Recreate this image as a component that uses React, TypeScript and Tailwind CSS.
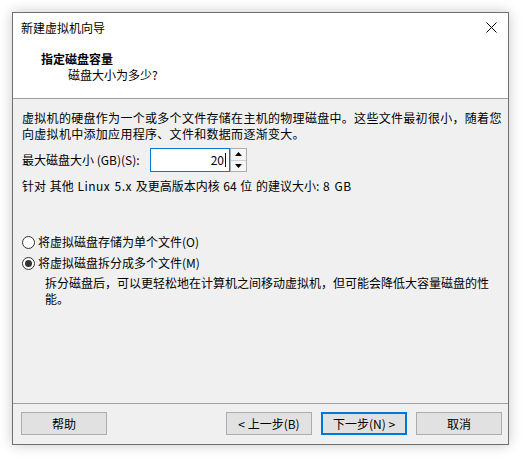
import React from "react";

const font = { fontFamily: '"Noto Sans CJK SC", "Noto Sans", sans-serif' };

function Btn({ children, primary }: { children: React.ReactNode; primary?: boolean }) {
  return (
    <div
      className={
        "w-[86px] h-[23px] flex items-center justify-center text-[12px] leading-none bg-[#e1e1e1] text-black " +
        (primary ? "border-2 border-[#0078d7]" : "border border-[#adadad]")
      }
    >
      {children}
    </div>
  );
}

function Radio({ checked }: { checked?: boolean }) {
  return (
    <div className="w-[13px] h-[13px] rounded-full border border-[#333333] bg-white flex items-center justify-center shrink-0">
      {checked && <div className="w-[7px] h-[7px] rounded-full bg-[#333333]" />}
    </div>
  );
}

export default function App() {
  return (
    <div className="w-[525px] h-[461px] bg-white pl-[12px] pt-[12px]" style={font}>
      <div className="w-[497px] h-[433px] border border-[#707070] bg-[#f0f0f0] flex flex-col shadow-[0_0_12px_rgba(0,0,0,0.22)] text-black">
        {/* header */}
        <div className="bg-white border-b border-[#a0a0a0] h-[86px] flex flex-col">
          <div className="h-[29px] flex items-center justify-between pl-[8px] pr-[10px]">
            <span className="text-[12px] leading-none">新建虚拟机向导</span>
            <svg width="11" height="11" viewBox="0 0 11 11" className="mr-[1px]">
              <path d="M0.5 0.5 L10.5 10.5 M10.5 0.5 L0.5 10.5" stroke="#000" strokeWidth="1" />
            </svg>
          </div>
          <div className="pl-[28px] pt-[9px] text-[12px] leading-[16px] font-bold">指定磁盘容量</div>
          <div className="pl-[55px] text-[12px] leading-[16px]">磁盘大小为多少?</div>
        </div>

        {/* body */}
        <div className="flex-1 flex flex-col pl-[9px] pr-[2px] text-[12px] leading-[16px]">
          <p className="mt-[11px] tracking-[0.3px]">
            虚拟机的硬盘作为一个或多个文件存储在主机的物理磁盘中。这些文件最初很小，随着您向虚拟机中添加应用程序、文件和数据而逐渐变大。
          </p>
          <div className="flex items-center mt-[6px] h-[24px]">
            <span className="w-[128px]">最大磁盘大小 (GB)(S):</span>
            <div className="w-[80px] h-[24px] border border-[#0078d7] bg-white flex items-center justify-end pr-[3px]">
              <span>20</span>
              <span className="w-px h-[14px] bg-black ml-px" />
            </div>
            <div className="w-[17px] h-[24px] border border-[#adadad] bg-[#f0f0f0] flex flex-col">
              <div className="flex-1 flex items-center justify-center border-b border-[#cfcfcf] bg-[#f6f6f6]">
                <svg width="7" height="4" viewBox="0 0 7 4"><path d="M3.5 0 L7 4 L0 4 Z" fill="#000" /></svg>
              </div>
              <div className="flex-1 flex items-center justify-center bg-[#f6f6f6]">
                <svg width="7" height="4" viewBox="0 0 7 4"><path d="M0 0 L7 0 L3.5 4 Z" fill="#000" /></svg>
              </div>
            </div>
          </div>
          <div className="mt-[6px] [word-spacing:1px]">
            针对 其他 <span className="tracking-[0.5px]">Linux 5.x</span> 及更高版本内核 64 位 的建议大小: <span className="tracking-[0.5px]">8 GB</span>
          </div>

          <div className="flex items-center mt-[40px] gap-[3px]">
            <Radio />
            <span>将虚拟磁盘存储为单个文件(O)</span>
          </div>
          <div className="flex items-center mt-[5px] gap-[3px]">
            <Radio checked />
            <span>将虚拟磁盘拆分成多个文件(M)</span>
          </div>
          <p className="pl-[23px] mt-[4px] pr-[12px]">
            拆分磁盘后，可以更轻松地在计算机之间移动虚拟机，但可能会降低大容量磁盘的性能。
          </p>
        </div>

        {/* footer */}
        <div className="border-t border-[#a0a0a0] h-[41px] flex items-center pl-[8px] pr-[6px] pb-[1px]">
          <Btn>帮助</Btn>
          <div className="flex-1" />
          <div className="flex gap-[9px]">
            <Btn>&lt; 上一步(B)</Btn>
            <Btn primary>下一步(N) &gt;</Btn>
            <Btn>取消</Btn>
          </div>
        </div>
      </div>
    </div>
  );
}
